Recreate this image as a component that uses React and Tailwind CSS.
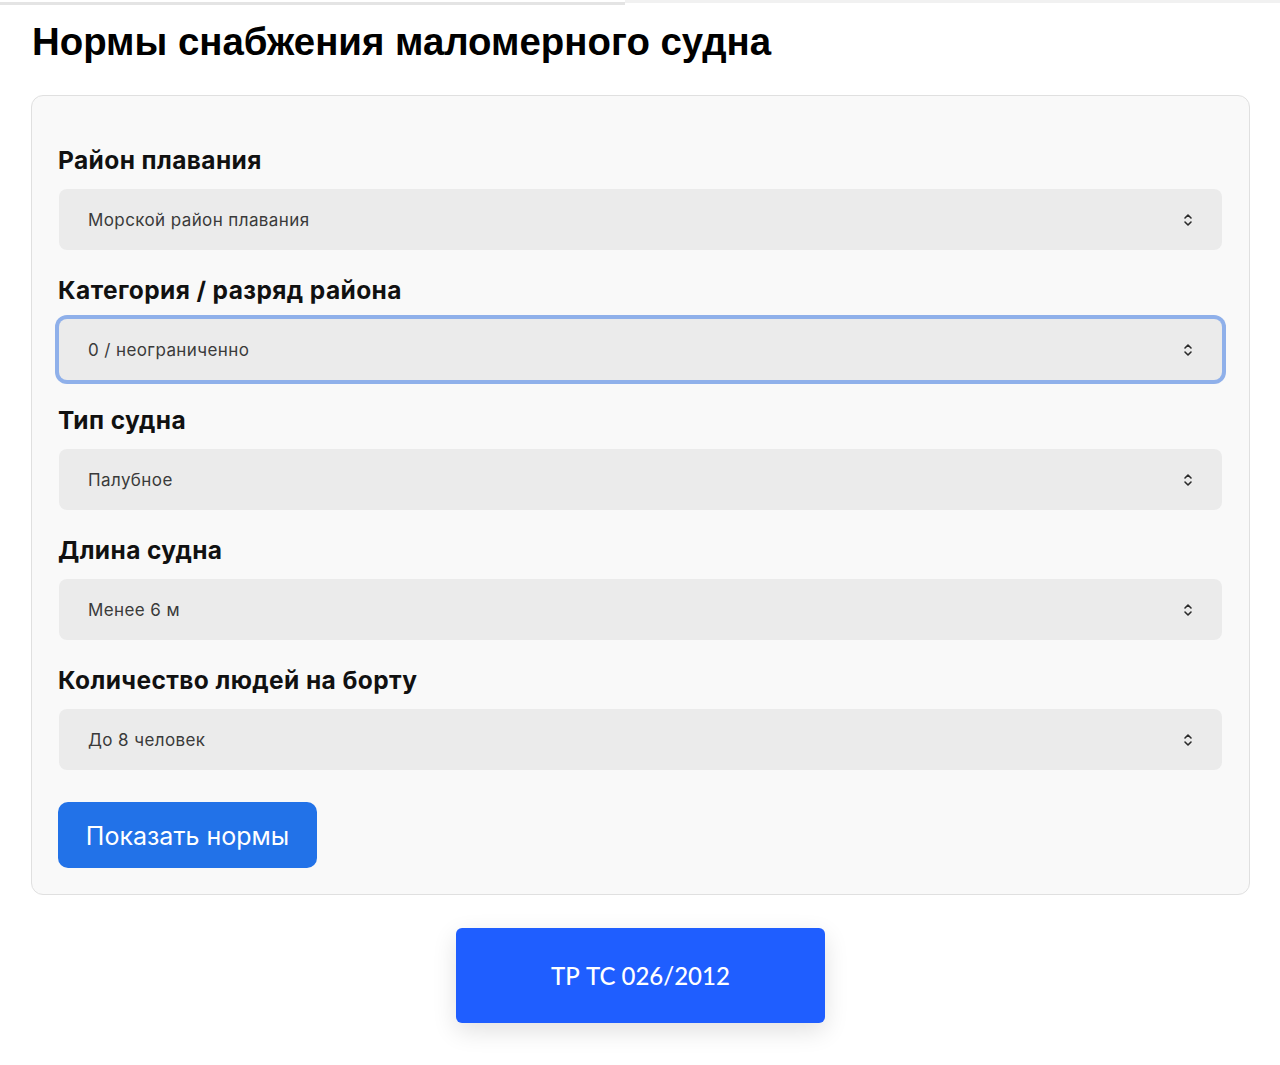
import React from 'react'

const fields = [
  { label: 'Район плавания', value: 'Морской район плавания' },
  { label: 'Категория / разряд района', value: '0 / неограниченно', focused: true },
  { label: 'Тип судна', value: 'Палубное' },
  { label: 'Длина судна', value: 'Менее 6 м' },
  { label: 'Количество людей на борту', value: 'До 8 человек' },
]

function Chevrons() {
  return (
    <svg width="10" height="14" viewBox="0 0 10 14" fill="none" stroke="#2b2b2b" strokeWidth="1.6" strokeLinecap="round" strokeLinejoin="round">
      <path d="M2 5 L5 2 L8 5" />
      <path d="M2 9 L5 12 L8 9" />
    </svg>
  )
}

function SelectField({ label, value, focused }) {
  return (
    <div className="flex flex-col">
      <div className="h-8 text-[24.5px] leading-8 font-bold tracking-[0.4px] text-[#111] font-['Inter',sans-serif]">{label}</div>
      <div
        className={
          focused
            ? 'mt-[13px] ml-px h-[61px] flex items-center justify-between rounded-lg bg-[#ebebeb] pl-[29px] pr-[29px] ring-4 ring-[#8fb0ea]'
            : 'mt-[13px] ml-px h-[61px] flex items-center justify-between rounded-lg bg-[#ebebeb] pl-[29px] pr-[29px]'
        }
      >
        <span className="pt-[3px] text-[17px] tracking-[0.4px] text-[#3a3a3a] font-['Inter',sans-serif]">{value}</span>
        <Chevrons />
      </div>
    </div>
  )
}

export default function App() {
  return (
    <div className="min-h-[1065px] bg-white">
      <div className="flex h-[5px]">
        <div className="w-[625px] mt-[2px] h-[3px] bg-[#e4e4e4]" />
        <div className="flex-1 h-[3px] bg-[#f1f1f1]" />
      </div>
      <div className="pl-[31px] pr-[30px]">
        <h1 className="ml-px mt-[17px] h-10 text-[38.4px] leading-10 font-bold text-black font-['Liberation_Sans',Arial,sans-serif]">
          Нормы снабжения маломерного судна
        </h1>
        <div className="mt-[33px] rounded-xl border border-[#e0e0e0] bg-[#f9f9f9] pl-[26px] pr-[27px] pt-[48px] pb-[26px]">
          <div className="flex flex-col gap-6">
            {fields.map((f) => (
              <SelectField key={f.label} {...f} />
            ))}
          </div>
          <button className="mt-8 h-[66px] w-[259px] rounded-[10px] bg-[#2272e8] pt-[3px] text-[25px] text-white font-['Inter',sans-serif]">
            Показать нормы
          </button>
        </div>
        <div className="mt-[33px] flex justify-center">
          <button className="h-[95px] w-[369px] rounded-md bg-[#1f5eff] text-[24px] font-medium text-white font-['Lato',sans-serif] shadow-[0_8px_24px_rgba(0,0,0,0.12)]">
            ТР ТС 026/2012
          </button>
        </div>
      </div>
    </div>
  )
}
